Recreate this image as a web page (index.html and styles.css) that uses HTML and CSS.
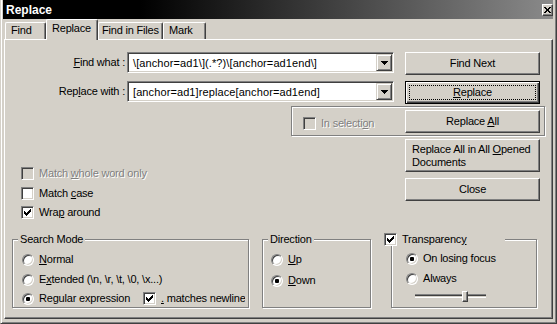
FILE: index.html
```html
<!DOCTYPE html>
<html lang="en">
<head>
  <meta charset="UTF-8">
  <title>Replace</title>
  <link rel="stylesheet" href="styles.css">
</head>
<body>
  <div class="window">
    <div class="titlebar">
      <span class="title">Replace</span>
      <span class="close-box">
        <svg width="7" height="6" viewBox="0 0 7 6" shape-rendering="crispEdges"><path d="M0 0h2v1H0z M5 0h2v1H5z M1 1h2v1H1z M4 1h2v1H4z M2 2h3v2H2z M1 4h2v1H1z M4 4h2v1H4z M0 5h2v1H0z M5 5h2v1H5z" fill="#000"/></svg>
      </span>
    </div>

    <div class="tabs">
      <div class="tab tab-find">Find</div>
      <div class="tab tab-replace active">Replace</div>
      <div class="tab tab-files">Find in Files</div>
      <div class="tab tab-mark">Mark</div>
    </div>

    <div class="panel">
      <div class="row row-find">
        <label class="field-label"><u>F</u>ind what :</label>
        <div class="combo">
          <span class="combo-text">\[anchor=ad1\](.*?)\[anchor=ad1end\]</span>
          <span class="combo-btn"><svg width="7" height="4" viewBox="0 0 7 4" shape-rendering="crispEdges"><path d="M0 0h7v1H0z M1 1h5v1H1z M2 2h3v1H2z M3 3h1v1H3z" fill="#000"/></svg></span>
        </div>
        <button class="btn">Find Next</button>
      </div>

      <div class="row row-replace">
        <label class="field-label">Rep<u>l</u>ace with :</label>
        <div class="combo">
          <span class="combo-text">[anchor=ad1]replace[anchor=ad1end]</span>
          <span class="combo-btn"><svg width="7" height="4" viewBox="0 0 7 4" shape-rendering="crispEdges"><path d="M0 0h7v1H0z M1 1h5v1H1z M2 2h3v1H2z M3 3h1v1H3z" fill="#000"/></svg></span>
        </div>
        <button class="btn btn-default"><span class="focus-ring"><u>R</u>eplace</span></button>
      </div>

      <div class="selection-group">
        <div class="check disabled sel-check"><span class="box"></span><span>In selecti<u>o</u>n</span></div>
        <button class="btn btn-all">Replace <u>A</u>ll</button>
      </div>

      <div class="row-middle">
        <div class="options">
          <div class="check disabled opt-1"><span class="box"></span><span>Match <u>w</u>hole word only</span></div>
          <div class="check opt-2"><span class="box"></span><span>Match <u>c</u>ase</span></div>
          <div class="check opt-3"><span class="box"><svg width="7" height="7" viewBox="0 0 7 7" shape-rendering="crispEdges"><path d="M0 2h1v3H0z M1 3h1v3H1z M2 4h1v3H2z M3 3h1v3H3z M4 2h1v3H4z M5 1h1v3H5z M6 0h1v3H6z" fill="#000"/></svg></span><span>Wra<u>p</u> around</span></div>
        </div>
        <div class="side-buttons">
          <button class="btn btn-tall">Replace All in All <u>O</u>pened<br>Documents</button>
          <button class="btn btn-close">Close</button>
        </div>
      </div>

      <div class="row-groups">
        <div class="group group-mode">
          <span class="legend">Search Mode</span>
          <div class="radio mode-1"><span class="dot"></span><span><u>N</u>ormal</span></div>
          <div class="radio mode-2"><span class="dot"></span><span>E<u>x</u>tended (\n, \r, \t, \0, \x...)</span></div>
          <div class="radio-row mode-3">
            <div class="radio checked regex"><span class="dot"></span><span>Re<u>g</u>ular expression</span></div>
            <div class="check newline"><span class="box"><svg width="7" height="7" viewBox="0 0 7 7" shape-rendering="crispEdges"><path d="M0 2h1v3H0z M1 3h1v3H1z M2 4h1v3H2z M3 3h1v3H3z M4 2h1v3H4z M5 1h1v3H5z M6 0h1v3H6z" fill="#000"/></svg></span><span><u>.</u> matches newline</span></div>
          </div>
        </div>

        <div class="group group-dir">
          <span class="legend">Direction</span>
          <div class="radio dir-1"><span class="dot"></span><span><u>U</u>p</span></div>
          <div class="radio checked dir-2"><span class="dot"></span><span><u>D</u>own</span></div>
        </div>

        <div class="group group-trans">
          <div class="check trans-check"><span class="box"><svg width="7" height="7" viewBox="0 0 7 7" shape-rendering="crispEdges"><path d="M0 2h1v3H0z M1 3h1v3H1z M2 4h1v3H2z M3 3h1v3H3z M4 2h1v3H4z M5 1h1v3H5z M6 0h1v3H6z" fill="#000"/></svg></span><span>Transparenc<u>y</u></span></div>
          <div class="radio checked trans-1"><span class="dot"></span><span>On losing focus</span></div>
          <div class="radio trans-2"><span class="dot"></span><span>Always</span></div>
          <div class="slider"><span class="thumb"></span></div>
        </div>
      </div>
    </div>
  </div>
</body>
</html>
```

FILE: styles.css
```css
body {
  margin: 0;
  font-family: "Liberation Sans", Arial, sans-serif;
  font-size: 11px;
  letter-spacing: -0.2px;
  color: #000;
  background: #d4d0c8;
}

u {
  text-decoration: underline;
  text-underline-offset: 1px;
}

.window {
  width: 557px;
  height: 324px;
  box-sizing: border-box;
  background: #d4d0c8;
  border-left: 1px solid #d4d0c8;
  border-right: 1px solid #404040;
  border-bottom: 1px solid #404040;
  box-shadow: inset 1px 0 0 #fff, inset -1px -1px 0 #808080;
  padding: 0 3px 4px 2px;
  display: flex;
  flex-direction: column;
}

/* title bar */
.titlebar {
  flex: none;
  height: 19px;
  display: flex;
  align-items: center;
  justify-content: space-between;
  padding-left: 3px;
  background: linear-gradient(to right, #000 25%, #8a8a8a);
}

.title {
  color: #fff;
  font-weight: bold;
  font-size: 12px;
  letter-spacing: 0;
}

.close-box {
  width: 11px;
  height: 12px;
  box-sizing: border-box;
  background: #d4d0c8;
  border: 1px solid;
  border-color: #fff #404040 #404040 #fff;
  box-shadow: inset -1px -1px 0 #808080;
  display: flex;
  align-items: center;
  justify-content: center;
}

/* tabs */
.tabs {
  flex: none;
  height: 20px;
  display: flex;
  align-items: flex-end;
  padding-left: 2px;
}

.tab {
  height: 17px;
  box-sizing: border-box;
  border-top: 1px solid #fff;
  border-left: 1px solid #fff;
  border-right: 1px solid #404040;
  box-shadow: inset -1px 0 0 #808080;
  border-radius: 2px 2px 0 0;
  padding: 1px 0 0 5px;
  line-height: 13px;
  white-space: nowrap;
}

.tab.active {
  height: 21px;
  margin-bottom: -1px;
  padding-top: 2px;
  background: #d4d0c8;
  position: relative;
  z-index: 1;
}

.tab-find { width: 41px; }
.tab-replace { width: 52px; }
.tab-files { width: 65px; padding-left: 3px; }
.tab-mark { width: 43px; }

/* main panel */
.panel {
  flex: 1;
  margin-left: 1px;
  border-top: 1px solid #fff;
  border-left: 1px solid #fff;
  border-right: 1px solid #404040;
  border-bottom: 1px solid #404040;
  box-shadow: inset -1px -1px 0 #808080;
}

.row {
  display: flex;
  align-items: flex-start;
  height: 23px;
}

.row-find { margin-top: 12px; }
.row-replace { margin-top: 6px; }

.field-label {
  width: 120px;
  margin-right: 2px;
  text-align: right;
  line-height: 21px;
  white-space: nowrap;
}

.combo {
  width: 267px;
  height: 21px;
  box-sizing: border-box;
  margin-right: 11px;
  padding: 1px;
  border: 1px solid;
  border-color: #808080 #fff #fff #808080;
  box-shadow: inset 1px 1px 0 #404040, inset -1px -1px 0 #d4d0c8;
  background: #fff;
  display: flex;
  align-items: center;
}

.combo-text {
  flex: 1;
  padding-left: 4px;
  letter-spacing: 0.1px;
  white-space: nowrap;
  overflow: hidden;
}

.combo-btn {
  width: 16px;
  height: 17px;
  box-sizing: border-box;
  background: #d4d0c8;
  border: 1px solid;
  border-color: #d4d0c8 #404040 #404040 #d4d0c8;
  box-shadow: inset 1px 1px 0 #fff, inset -1px -1px 0 #808080;
  display: flex;
  align-items: center;
  justify-content: center;
}

/* buttons */
.btn {
  width: 135px;
  height: 23px;
  box-sizing: border-box;
  margin: 0;
  padding: 0;
  font: inherit;
  letter-spacing: inherit;
  color: #000;
  line-height: 13px;
  background: #d4d0c8;
  border: 1px solid;
  border-color: #fff #404040 #404040 #fff;
  box-shadow: inset -1px -1px 0 #808080;
  text-align: center;
}

.btn-default {
  border: 1px solid #000;
  box-shadow: inset 1px 1px 0 #fff, inset -1px -1px 0 #404040, inset -2px -2px 0 #808080;
  padding: 3px;
}

.focus-ring {
  display: block;
  height: 100%;
  box-sizing: border-box;
  border: 1px dotted #000;
}

.btn-all { margin-left: auto; }

.btn-tall {
  height: 33px;
  margin-top: 3px;
  padding-left: 6px;
  text-align: left;
  white-space: nowrap;
}

.btn-close { margin-top: 6px; }

/* checkboxes and radios */
.check,
.radio {
  display: flex;
  align-items: center;
  height: 13px;
  line-height: 13px;
  white-space: nowrap;
}

.box {
  width: 13px;
  height: 13px;
  flex: none;
  box-sizing: border-box;
  margin-right: 5px;
  border: 1px solid;
  border-color: #808080 #fff #fff #808080;
  box-shadow: inset 1px 1px 0 #404040, inset -1px -1px 0 #d4d0c8;
  background: #fff;
  display: flex;
  align-items: center;
  justify-content: center;
}

.dot {
  width: 12px;
  height: 12px;
  flex: none;
  box-sizing: border-box;
  margin-right: 5px;
  border-radius: 50%;
  border: 1px solid;
  border-color: #808080 #fff #fff #808080;
  box-shadow: inset 1px 1px 0 #404040, inset -1px -1px 0 #d4d0c8;
  background: #fff;
  display: flex;
  align-items: center;
  justify-content: center;
}

.radio.checked .dot::after {
  content: "";
  width: 4px;
  height: 4px;
  border-radius: 1px;
  background: #000;
}

.disabled {
  color: #808080;
  text-shadow: 1px 1px 0 #fff;
}

.disabled .box {
  background: #d4d0c8;
}

/* in selection group */
.selection-group {
  margin: 2px 0 0 286px;
  width: 254px;
  height: 30px;
  box-sizing: border-box;
  padding: 3px 4px 0 11px;
  border: 1px solid #808080;
  box-shadow: inset 1px 1px 0 #fff, 1px 1px 0 #fff;
  display: flex;
  align-items: flex-start;
}

.sel-check { margin-top: 7px; }

/* middle row */
.row-middle {
  display: flex;
  height: 103px;
}

.options {
  width: 384px;
  padding-left: 16px;
}

.opt-1 { margin-top: 31px; }
.opt-2 { margin-top: 7px; }
.opt-3 { margin-top: 6px; }

.side-buttons {
  width: 135px;
}

/* bottom groups */
.row-groups {
  display: flex;
  align-items: flex-start;
}

.group {
  height: 69px;
  box-sizing: border-box;
  border: 1px solid #808080;
  box-shadow: inset 1px 1px 0 #fff, 1px 1px 0 #fff;
  display: flex;
  flex-direction: column;
  align-items: flex-start;
}

.legend {
  margin: -7px 0 0 5px;
  padding: 0 2px;
  background: #d4d0c8;
  line-height: 13px;
}

.group-mode {
  width: 237px;
  margin-left: 7px;
}

.group-mode .radio { margin-left: 9px; }
.mode-1 { margin-top: 7px; }
.mode-2 { margin-top: 7px; }
.mode-3 { margin-top: 6px; }

.radio-row {
  display: flex;
  align-items: center;
}

.group-mode .regex {
  width: 121px;
}

.newline {
  width: 102px;
  overflow: hidden;
}

.group-dir {
  width: 109px;
  margin-left: 13px;
}

.group-dir .radio { margin-left: 8px; }
.dir-1 { margin-top: 7px; }
.dir-2 { margin-top: 8px; }

.group-trans {
  width: 146px;
  margin-left: 20px;
}

.trans-check {
  width: 121px;
  margin: -7px 0 0 -8px;
  background: #d4d0c8;
}

.group-trans .radio { margin-left: 14px; }
.trans-1 { margin-top: 6px; }
.trans-2 { margin-top: 7px; }

.slider {
  width: 71px;
  height: 12px;
  margin: 5px 0 0 23px;
  background: linear-gradient(to bottom,
    transparent 4px, #808080 4px, #808080 5px,
    #404040 5px, #404040 6px, #d4d0c8 6px, #d4d0c8 7px,
    #fff 7px, #fff 8px, transparent 8px);
}

.thumb {
  display: block;
  width: 6px;
  height: 11px;
  margin: 1px 0 0 47px;
  box-sizing: border-box;
  background: #d4d0c8;
  border: 1px solid;
  border-color: #fff #404040 #404040 #fff;
  box-shadow: inset -1px -1px 0 #808080;
}
```
